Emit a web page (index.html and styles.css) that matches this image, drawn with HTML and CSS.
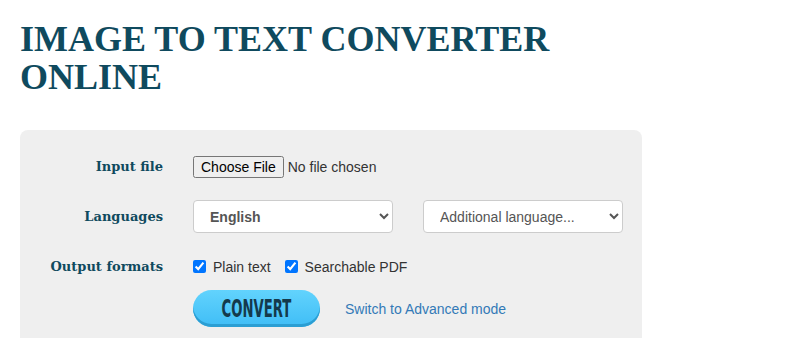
FILE: index.html
```html
<!DOCTYPE html>
<html>
  <head>
    <title>Image to Text Converter Online</title>
    <link rel="stylesheet" href="styles.css">
  </head>
  <body>
    <div class="page">
      <h1 class="title">Image to text converter online</h1>

      <form class="panel">
        <div class="row row-file">
          <label class="label" for="inputFile">Input file</label>
          <div class="control">
            <input type="file" id="inputFile" class="file-input" />
          </div>
        </div>

        <div class="row row-lang">
          <label class="label" for="language">Languages</label>
          <div class="control">
            <select id="language" class="select select-main">
              <option>English</option>
            </select>
            <select id="language2" class="select select-extra">
              <option>Additional language...</option>
            </select>
          </div>
        </div>

        <div class="row row-formats">
          <span class="label">Output formats</span>
          <div class="control">
            <label class="check"><input type="checkbox" checked /> Plain text</label>
            <label class="check"><input type="checkbox" checked /> Searchable PDF</label>
          </div>
        </div>

        <div class="row row-submit">
          <span class="label"></span>
          <div class="control">
            <button type="button" class="convert"><span>CONVERT</span></button>
            <a href="#" class="mode-link">Switch to Advanced mode</a>
          </div>
        </div>
      </form>
    </div>
  </body>
</html>
```

FILE: styles.css
```css
body {
  margin: 0;
  background-color: #fff;
  font-family: Arial, "Liberation Sans", sans-serif;
  color: #333;
}

.page {
  padding: 20px 0 0 20px;
}

.title {
  margin: 0 0 34px;
  font-family: "Liberation Serif", "Times New Roman", serif;
  font-size: 36px;
  line-height: 38px;
  font-weight: bold;
  text-transform: uppercase;
  color: #0f4a5e;
  max-width: 600px;
}

.panel {
  width: 622px;
  height: 208px;
  box-sizing: border-box;
  padding-top: 20px;
  background-color: #efefef;
  border-radius: 8px 8px 0 0;
}

.row {
  display: flex;
  align-items: center;
  height: 33px;
  margin-bottom: 17px;
}

.row-formats {
  margin-bottom: 7px;
}

.row-submit {
  height: 37px;
  margin-bottom: 0;
}

.label {
  width: 143px;
  flex-shrink: 0;
  margin-right: 30px;
  text-align: right;
  font-family: "DejaVu Serif", Georgia, serif;
  font-size: 13px;
  font-weight: bold;
  color: #0f4a5e;
}

.control {
  display: flex;
  align-items: center;
}

.file-input {
  font-family: Arial, "Liberation Sans", sans-serif;
  font-size: 14px;
  color: #333;
}

.select {
  width: 200px;
  height: 33px;
  padding: 0 8px 0 12px;
  font-family: Arial, "Liberation Sans", sans-serif;
  font-size: 14px;
  color: #555;
  background-color: #fff;
  border: 1px solid #ccc;
  border-radius: 4px;
}

.select-main {
  font-weight: bold;
  margin-right: 30px;
}

.check {
  display: flex;
  align-items: center;
  font-size: 14px;
  color: #333;
  margin-right: 14px;
}

.check input {
  width: 13px;
  height: 13px;
  margin: 0 7px 0 0;
}

.convert {
  width: 127px;
  height: 37px;
  padding: 0;
  border: none;
  border-radius: 19px;
  background: linear-gradient(#62d3fd, #3fbdf6);
  box-shadow: inset 0 -3px 0 #2b9ed3;
  cursor: pointer;
}

.convert span {
  display: inline-block;
  font-family: "DejaVu Sans", sans-serif;
  font-weight: bold;
  font-size: 24px;
  color: #143a4c;
  transform: scaleX(0.55);
}

.convert:hover {
  background: linear-gradient(#4fc9f8, #2fb0ec);
}

.mode-link {
  margin-left: 25px;
  font-size: 14px;
  color: #337ab7;
  text-decoration: none;
}
```
